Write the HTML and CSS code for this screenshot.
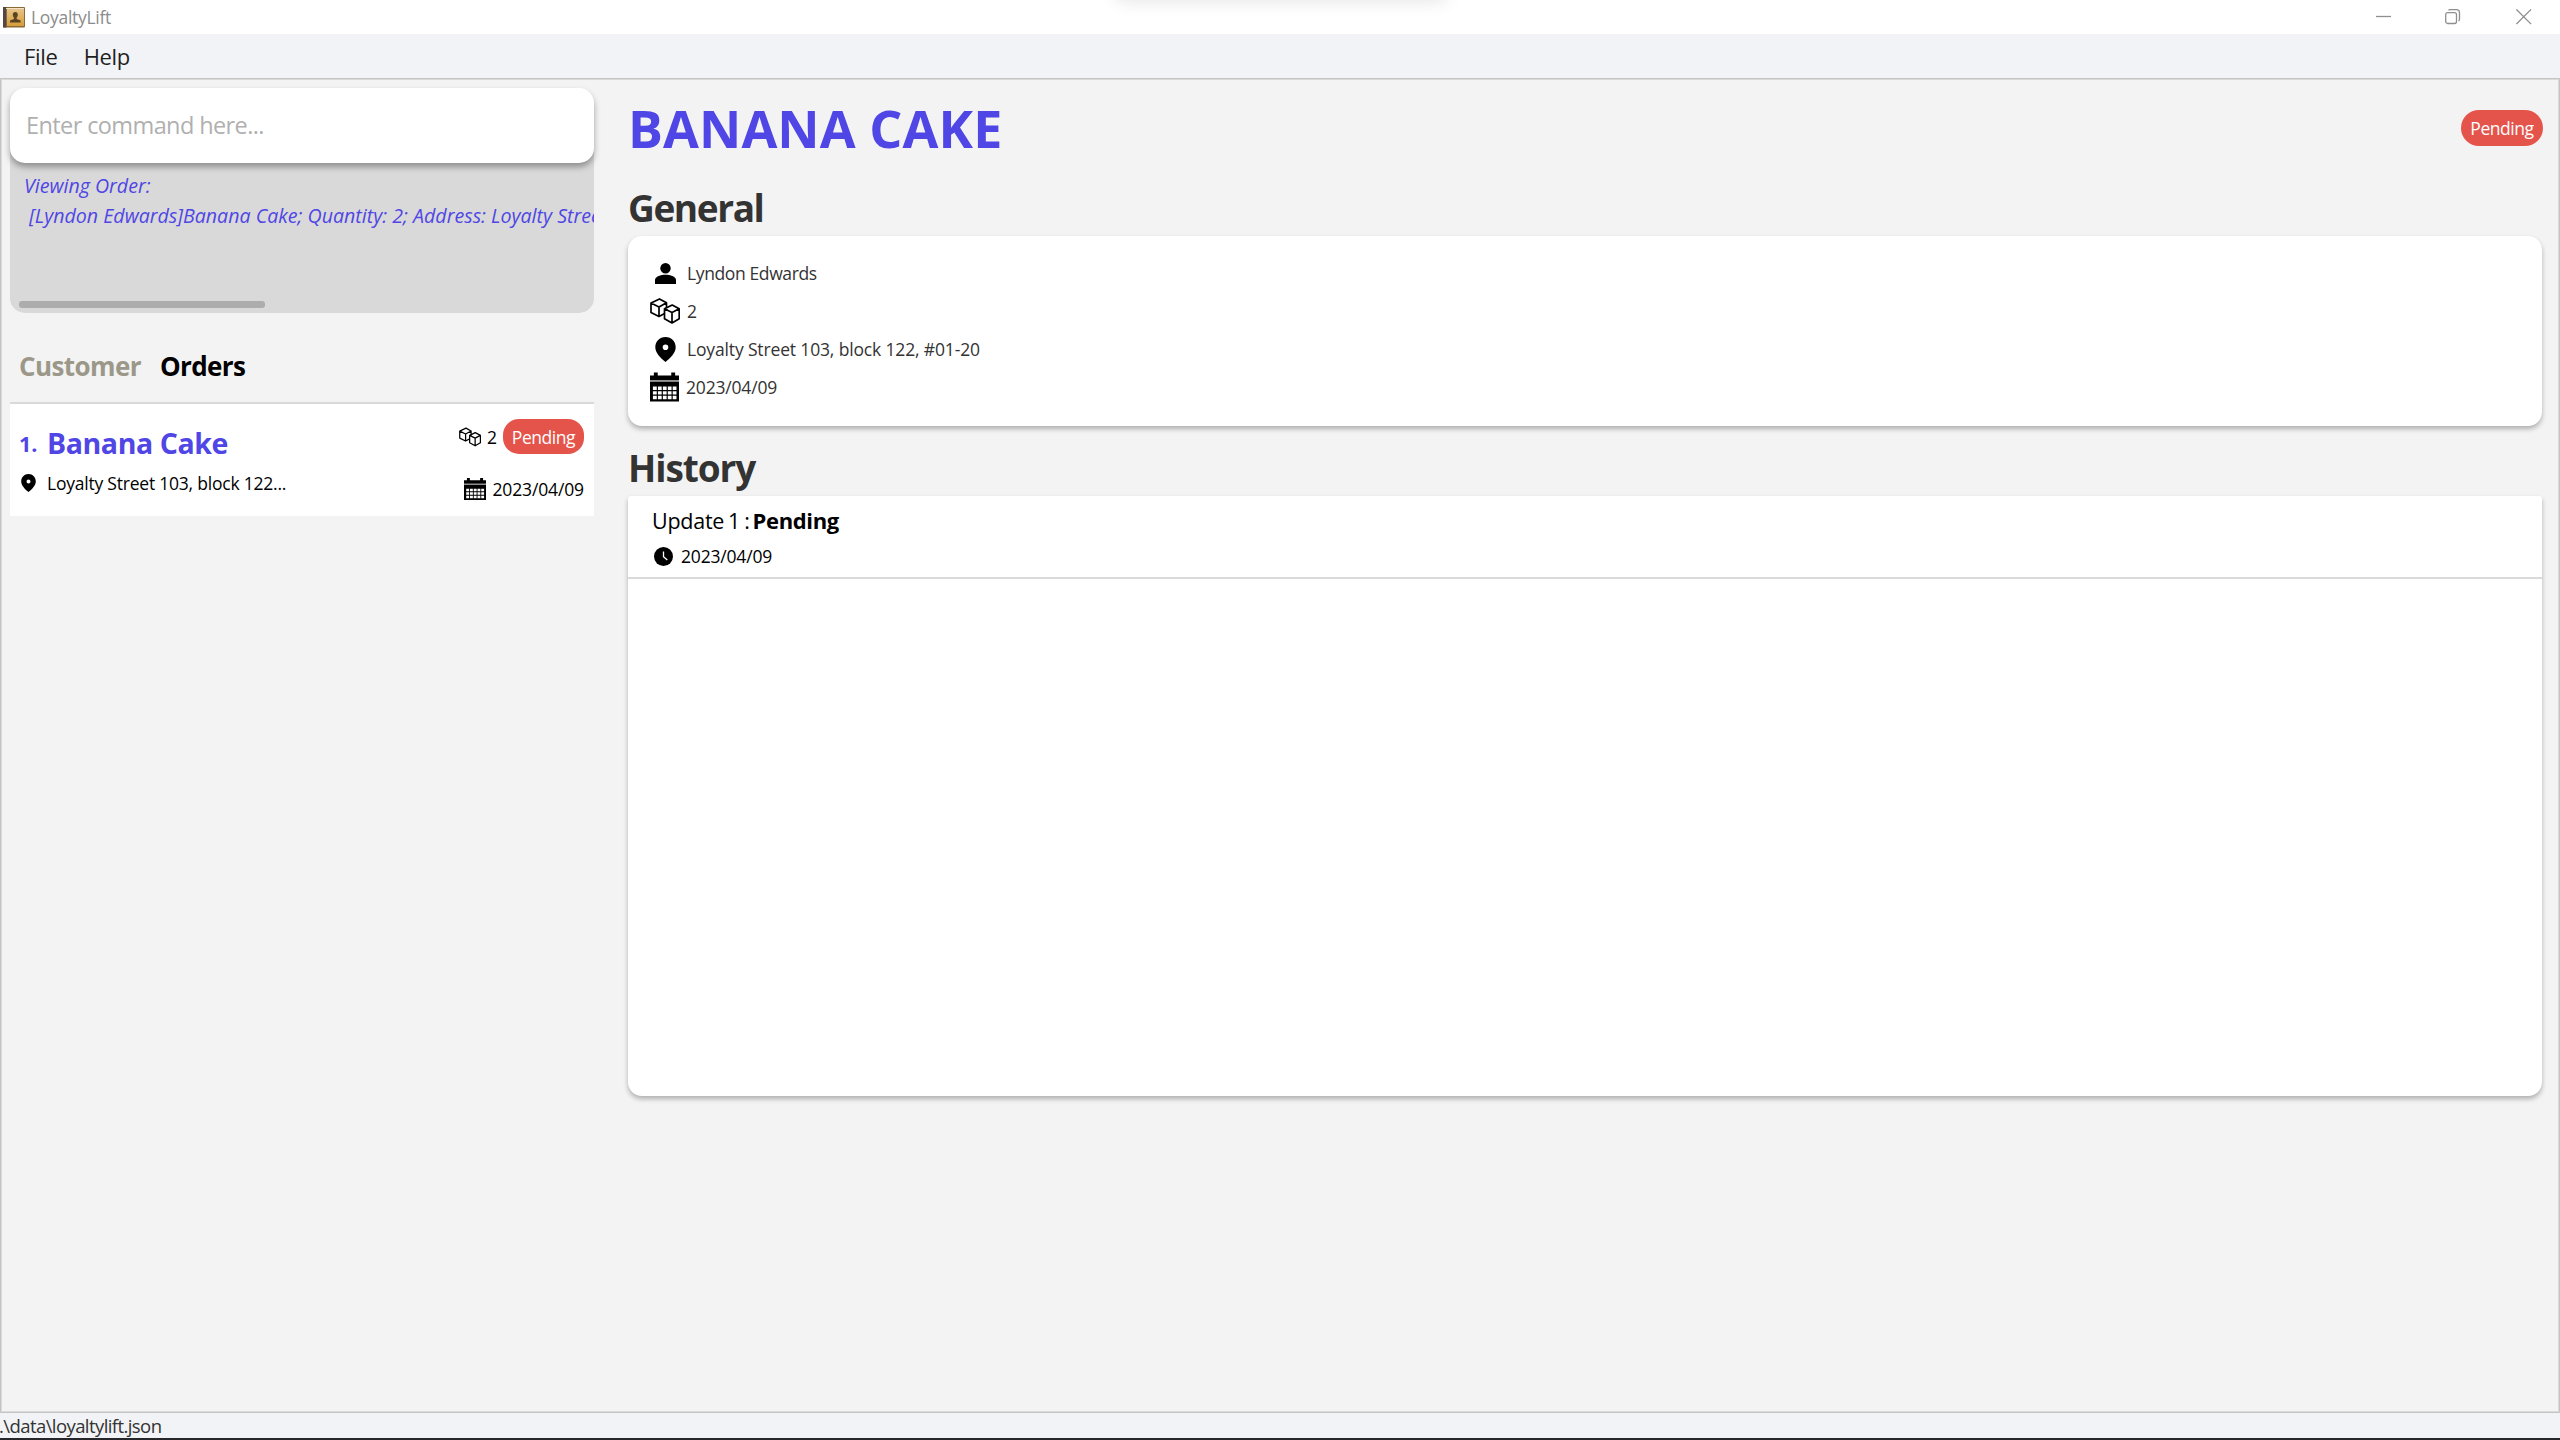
FILE: index.html
```
<!DOCTYPE html>
<html lang="en">
<head>
<meta charset="utf-8">
<title>LoyaltyLift</title>
<link rel="stylesheet" href="styles.css">
</head>
<body>
<svg width="0" height="0" class="defs">
  <defs>
    <symbol id="cubes" viewBox="0 0 30 26">
      <g fill="#fff" stroke="#000" stroke-width="1.7" stroke-linejoin="round">
        <path d="M1 5 9.500.9 16.500 4.800V14.500L9 18.500 1 14.500ZM1 5 9 9 16.500 4.800M9 9V18.500"/>
        <path d="M14.500 10.800 22.200 7 29.200 10.800V20.800L22 25 14.500 20.800ZM14.500 10.800 22 14.500 29.200 10.800M22 14.500V25"/>
      </g>
    </symbol>
    <symbol id="pin" viewBox="0 0 21 25">
      <path fill-rule="evenodd" d="M10.500 0C4.500 0 .3 4.500.3 10.300.3 16 6 21.500 10.500 25 15 21.500 20.700 16 20.700 10.300 20.700 4.500 16.500 0 10.500 0ZM10.500 7.500a2.800 2.800 0 1 1 0 5.600 2.800 2.800 0 0 1 0-5.600Z"/>
    </symbol>
    <symbol id="calendar" viewBox="0 0 30 30">
      <path d="M0 3H4V0H8V3H22V0H26V3H30V8H0Z"/>
      <path fill="#8a8a8a" d="M0 8H30V9.500H0Z"/>
      <path fill-rule="evenodd" d="M0 9.500H30V30H0ZM3 14.500V18H7V14.500ZM8.200 14.500V18H12.100V14.500ZM13.300 14.500V18H17.200V14.500ZM18.400 14.500V18H22.300V14.500ZM23.500 14.500V18H27.400V14.500ZM3 19.300V22.800H7V19.300ZM8.200 19.300V22.800H12.100V19.300ZM13.300 19.300V22.800H17.200V19.300ZM18.400 19.300V22.800H22.300V19.300ZM23.500 19.300V22.800H27.400V19.300ZM3 24.100V27.600H7V24.100ZM8.200 24.100V27.600H12.100V24.100ZM13.300 24.100V27.600H17.200V24.100ZM18.400 24.100V27.600H22.300V24.100ZM23.500 24.100V27.600H27.400V24.100Z"/>
    </symbol>
    <linearGradient id="cover" x1="0" y1="0" x2="0" y2="1">
      <stop offset="0" stop-color="#e6c48c"/><stop offset="1" stop-color="#d69e3c"/>
    </linearGradient>
  </defs>
</svg>
<div class="window">
  <header class="titlebar">
    <svg class="app-icon" width="22" height="21" viewBox="0 0 22 21">
      <rect x="0" y="0" width="22" height="20.500" rx="1" fill="#8d6a33"/>
      <rect x="3.500" y="1.500" width="17.500" height="17.500" fill="url(#cover)"/>
      <rect x="0" y="0" width="3.500" height="20.500" fill="#544741"/>
      <rect x="3" y="1" width="18" height="1" fill="#f0e2c6"/>
      <path fill="#5b4520" d="M12.300 5c1.700 0 2.500 1.100 2.500 2.700 0 1.300-.7 2.400-1.200 3v1.300l4 1.600V15.500H7V13.600l4-1.600v-1.300c-.6-.6-1.200-1.700-1.200-3C9.800 6.100 10.600 5 12.300 5Z"/>
    </svg>
    <span class="app-name">LoyaltyLift</span>
    <div class="controls">
      <svg width="16" height="16" viewBox="0 0 16 16"><path d="M0 7.500H15"/></svg>
      <svg width="16" height="16" viewBox="0 0 16 16"><rect x=".7" y="3.700" width="10.800" height="10.800" rx="2"/><path d="M3.500 1.300C4 .8 4.600.7 5 .7H11.500A3 3 0 0 1 14.500 3.700V10C14.500 11 14 11.800 13.500 12"/></svg>
      <svg width="16" height="16" viewBox="0 0 16 16"><path d="M.4.4 15.100 15.100M15.100.4.4 15.100"/></svg>
    </div>
    <div class="top-glow"></div>
  </header>
  <nav class="menubar"><span>File</span><span>Help</span></nav>
  <main class="workspace">
    <aside class="sidebar">
      <div class="command">Enter command here...</div>
      <div class="result">
        <pre class="result-text">Viewing Order:
 [Lyndon Edwards]Banana Cake; Quantity: 2; Address: Loyalty Street</pre>
        <div class="scroll-thumb"></div>
      </div>
      <div class="tabs"><span>Customer</span><span class="active">Orders</span></div>
      <div class="order">
        <div class="order-main">
          <div class="order-title"><span class="index">1.</span><span class="name">Banana Cake</span></div>
          <div class="order-address"><svg width="15" height="18"><use href="#pin"/></svg><span>Loyalty Street 103, block 122...</span></div>
        </div>
        <div class="order-meta">
          <div class="order-status"><svg width="22" height="20"><use href="#cubes"/></svg><span class="qty">2</span><span class="badge small">Pending</span></div>
          <div class="order-date"><svg width="22" height="22"><use href="#calendar"/></svg><span>2023/04/09</span></div>
        </div>
      </div>
    </aside>
    <section class="detail">
      <div class="detail-head"><h1>BANANA CAKE</h1><span class="badge">Pending</span></div>
      <h2 class="general-heading">General</h2>
      <div class="card general">
        <div class="row"><svg width="21" height="21" viewBox="0 0 21 21"><circle cx="10.500" cy="5.300" r="5.200"/><path d="M0 21V17C0 13.500 6 11.800 10.500 11.800S21 13.500 21 17V21Z"/></svg><span class="customer">Lyndon Edwards</span></div>
        <div class="row"><svg width="30" height="26"><use href="#cubes"/></svg><span>2</span></div>
        <div class="row"><svg width="21" height="25"><use href="#pin"/></svg><span class="address">Loyalty Street 103, block 122, #01-20</span></div>
        <div class="row dated"><svg width="29" height="30"><use href="#calendar"/></svg><span class="date">2023/04/09</span></div>
      </div>
      <h2>History</h2>
      <div class="card history">
        <div class="update">
          <div class="update-title"><span>Update</span><span>1</span><span>:</span><b>Pending</b></div>
          <div class="update-date"><svg width="19" height="19" viewBox="0 0 19 19"><circle cx="9.500" cy="9.500" r="9.500"/><path d="M9.500 4.500V9.800L13.300 13" fill="none" stroke="#fff" stroke-width="1.300"/></svg><span class="date">2023/04/09</span></div>
        </div>
      </div>
    </section>
  </main>
  <footer class="status">.\data\loyaltylift.json</footer>
</div>
</body>
</html>
```
FILE: styles.css
```
* { box-sizing: border-box; }
body { margin: 0; font: 17.5px "Open Sans", "Noto Sans", sans-serif; color: #000; }
.defs { position: absolute; }
svg { display: block; flex: none; }
.window { width: 2560px; height: 1440px; display: flex; flex-direction: column; overflow: hidden; background: #f3f3f3; border-bottom: 2px solid #26272b; }

.titlebar { position: relative; height: 34px; flex: none; display: flex; align-items: center; padding-left: 3px; background: #fff; overflow: hidden; }
.app-name { margin-left: 6px; padding-bottom: 1px; color: #8c8c8c; letter-spacing: -.3px; }
.controls { margin-left: auto; margin-right: 28px; display: flex; gap: 55px; }
.controls svg { fill: none; stroke: #8f8f8f; stroke-width: 1.3; }
.controls svg:first-child { margin-right: -2px; }
.top-glow { position: absolute; left: 1116px; top: -20px; width: 330px; height: 20px; box-shadow: 0 0 18px rgba(0,0,0,.12); }

.menubar { height: 44px; flex: none; display: flex; align-items: center; gap: 26px; padding: 0 0 1px 24px; background: #f2f3f6; font-size: 22px; letter-spacing: -.3px; color: #1f1f1f; }

.workspace { flex: 1; min-height: 0; display: flex; gap: 34px; padding: 9px 17px 0 9px; border: 1px solid #c4c4c4; box-shadow: inset 0 0 0 1px #dadada; }
.sidebar { width: 584px; flex: none; }
.command { position: relative; z-index: 1; height: 75px; padding: 0 16px; line-height: 74px; background: #fff; border-radius: 15px; box-shadow: 0 4px 6px rgba(0,0,0,.34); font-size: 23.5px; letter-spacing: -.6px; color: #b0b0b0; }
.result { height: 165px; margin-top: -15px; padding: 23px 0 5px 14px; display: flex; flex-direction: column; background: #d9d9d9; border-radius: 0 0 15px 15px; overflow: hidden; }
.result-text { margin: 0; font: italic 19.6px/30px "Open Sans", "Noto Sans", sans-serif; color: #4f46e5; white-space: pre; }
.scroll-thumb { margin: auto 0 0 -5px; width: 246px; height: 7px; flex: none; border-radius: 3px; background: #adadad; }
.tabs { height: 89px; padding: 17px 0 0 9px; display: flex; gap: 19px; align-items: center; font-size: 26px; font-weight: 700; letter-spacing: -.6px; color: #9b9889; }
.tabs .active { color: #000; }

.order { height: 114px; padding: 15px 10px 0 9px; display: flex; justify-content: space-between; background: #fff; border-top: 2px solid #d9d9d9; }
.order-main { padding-top: 4px; }
.order-title { height: 40px; display: flex; align-items: center; color: #4f46e5; }
.index { width: 28px; font-size: 21.5px; font-weight: 700; }
.name { font-size: 28.5px; font-weight: 700; letter-spacing: -.42px; }
.order-address { height: 28px; margin-top: 6px; padding-left: 2px; display: flex; gap: 11px; align-items: center; letter-spacing: -.22px; }
.order-meta { display: flex; flex-direction: column; align-items: flex-end; gap: 21px; }
.order-status { display: flex; align-items: center; }
.qty { margin: 0 6px 0 6px; }
.order-date { height: 28px; display: flex; align-items: center; gap: 6px; letter-spacing: -.13px; }
.date { letter-spacing: -.18px; }
.badge { height: 36px; width: 82px; padding-top: 1px; flex: none; line-height: 35px; text-align: center; border-radius: 18px; background: #e5544b; color: #fff; letter-spacing: -.45px; }
.badge.small { height: 35px; width: 81px; border-radius: 16px; }

.detail { flex: 1; min-width: 0; }
.detail-head { height: 78px; display: flex; align-items: center; justify-content: space-between; }
.detail-head .badge { margin: 2px -1px 0 0; }
h1, h2 { margin: 0; font-weight: 700; }
h1 { font-size: 52px; line-height: 78px; padding-top: 1px; color: #4f46e5; letter-spacing: .1px; }
h2 { height: 50px; margin-top: 17px; margin-bottom: 3px; font-size: 37px; line-height: 50px; letter-spacing: -1.1px; color: #333; }
.general-heading { letter-spacing: -1.4px; }
.card { background: #fff; border-radius: 14px; box-shadow: 0 3px 5px rgba(0,0,0,.28); }
.general { height: 190px; padding: 18px 22px; color: #333; }
.row { height: 38px; display: grid; grid-template-columns: 30px auto; justify-content: start; justify-items: center; align-items: center; gap: 7px; }
.row svg { fill: #000; }
.row span { justify-self: start; }
.dated { gap: 6px; justify-items: start; }
.customer { letter-spacing: -.38px; }
.address { letter-spacing: -.15px; }
.history { height: 600px; border-radius: 3px 3px 14px 14px; }
.update { height: 83px; padding: 6px 0 0 24px; border-bottom: 2px solid #dadada; }
.update-title { height: 36px; display: flex; align-items: center; font-size: 21.5px; letter-spacing: -.26px; }
.update-title span:nth-child(2) { margin-left: 4px; }
.update-title span:nth-child(3) { margin-left: 4px; }
.update-title b { margin-left: 3px; font-size: 22px; letter-spacing: -.35px; }
.update-date { height: 36px; padding-left: 2px; display: flex; align-items: center; gap: 8px; }

.status { height: 25px; flex: none; line-height: 25px; background: #f2f3f6; font-size: 18.5px; letter-spacing: -.58px; color: #333; text-indent: -1px; }
```
